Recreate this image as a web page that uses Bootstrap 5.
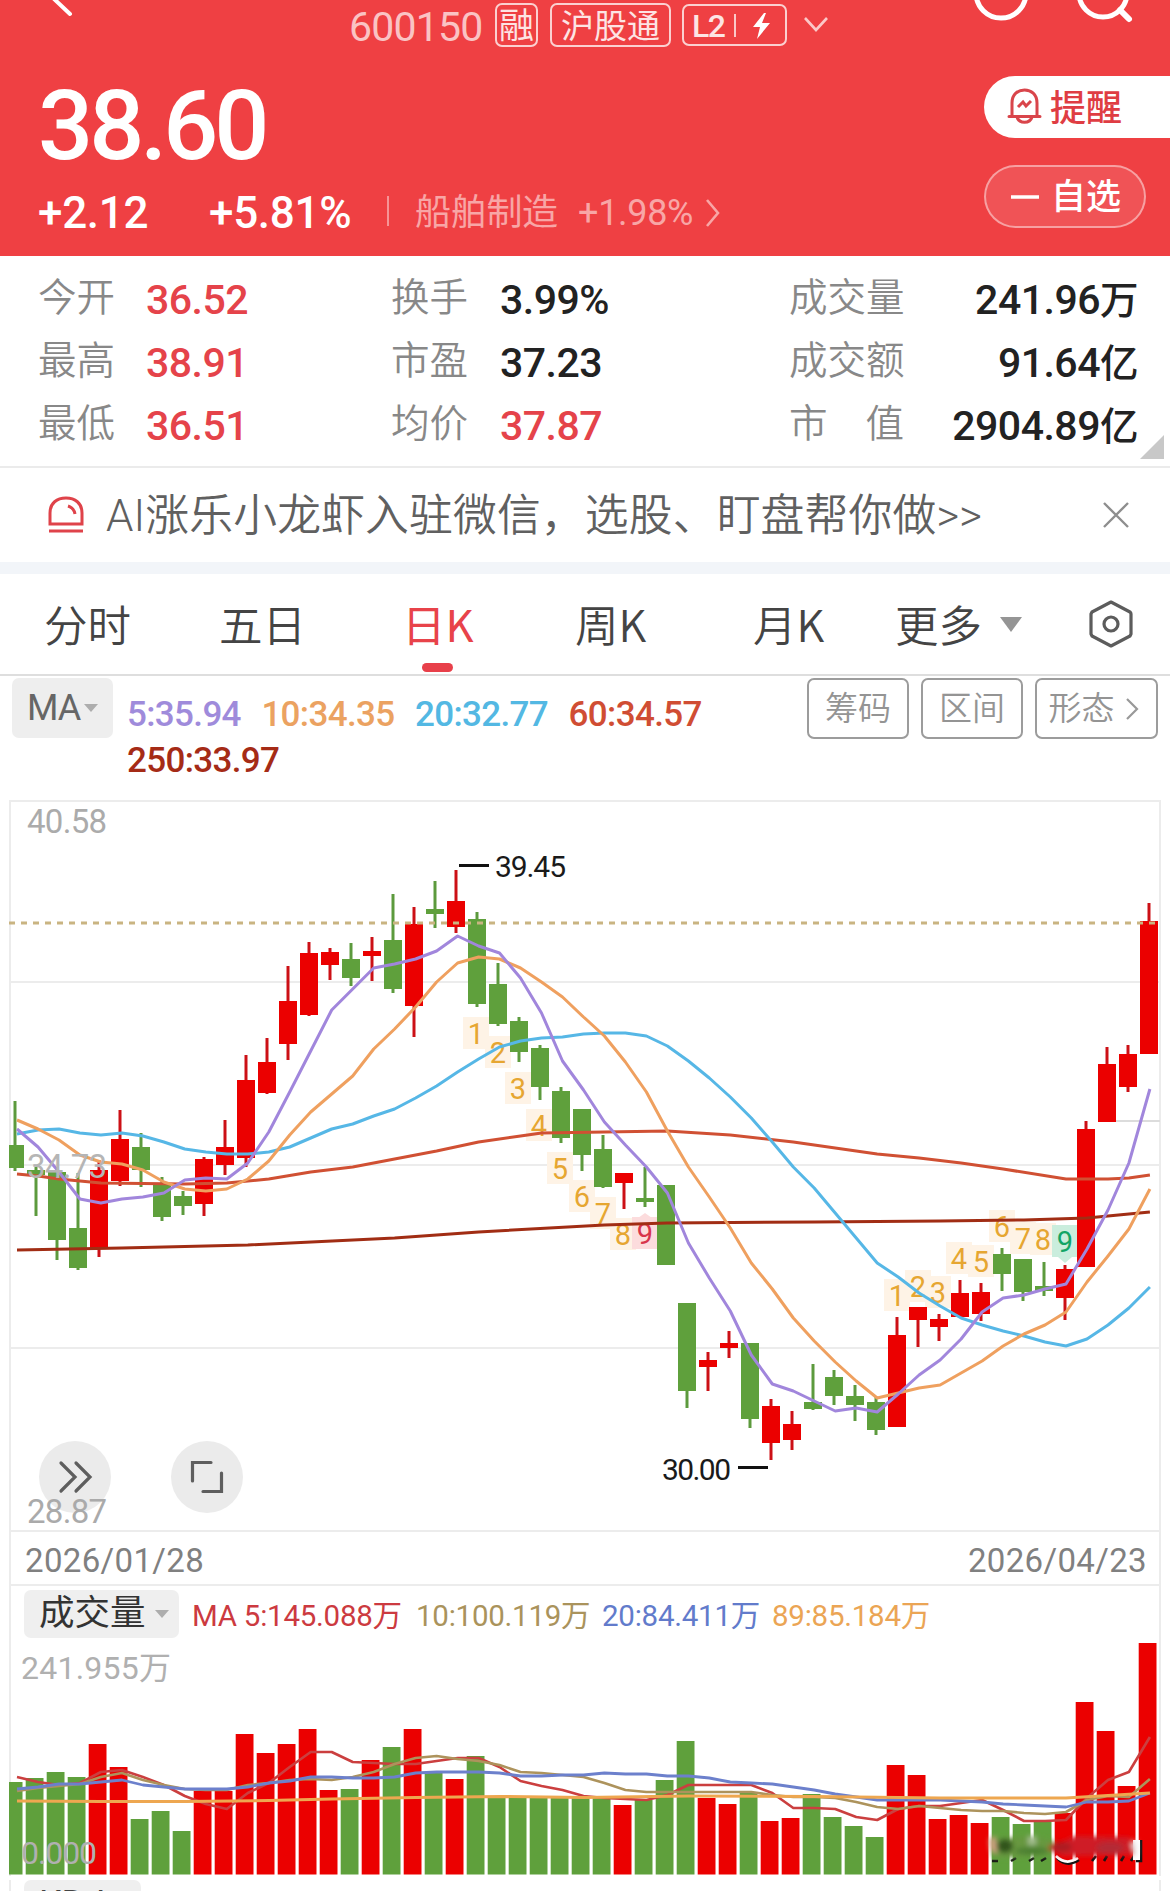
<!DOCTYPE html>
<html lang="zh-CN">
<head>
<meta charset="utf-8">
<meta name="viewport" content="width=device-width, initial-scale=1">
<title>600150</title>
<link href="https://cdn.jsdelivr.net/npm/bootstrap@5.3.0/dist/css/bootstrap.min.css" rel="stylesheet">
<style>
body{width:1170px;height:1891px;overflow:hidden;margin:0;background:#fff;font-family:Roboto,"Noto Sans CJK SC",sans-serif;line-height:1;color:#222}
svg{display:block;flex:none}
.text-nowrap{white-space:nowrap}
.hero{background:#ef4043;height:256px;color:#fff}
.titlebar{height:50px;padding-left:64px}
.back-ico{margin-left:-16px}
.code{font-size:41px;letter-spacing:-.8px;color:#fac3c4;width:133px;margin-left:269px;padding-top:5px}
.tagbox{border:2px solid #fbd0d0;border-radius:7px;height:44px;font-size:35px;color:#fde4e4;padding-top:3px}
.price{font-size:97px;font-weight:500;letter-spacing:-4px;height:69px;line-height:74px;margin-top:39px}
.chg{font-size:44px;height:40px;margin-top:35px;font-weight:500;line-height:44px;letter-spacing:-.3px}
.sector{font-size:36px;color:#f8a6a6;font-weight:400}
.pill-w{width:186px;height:62px;border-radius:31px 0 0 31px;background:#fff;color:#df3d43;margin-top:26px;font-size:36px;font-weight:500;padding-left:23px}
.pill-w span{padding-top:3px}
.pill-o{width:162px;height:63px;border-radius:32px;background:rgba(255,255,255,.1);border:2px solid rgba(255,255,255,.45);margin-top:27px;font-size:35px;font-weight:500;padding-left:25px}
.pill-o span{padding-top:2px}
.stats{height:212px;padding-top:11px;border-bottom:2px solid #ebebeb;position:relative}
.stat-row{height:63px;padding-left:38px;padding-right:32px}
.lb{font-size:38.5px;color:#888;font-weight:350}
.vl{font-size:41px;font-weight:500;padding-top:4px;letter-spacing:-.5px}
.up{color:#e5434a}
.c1l{width:108px}.c1v{width:245px}.c2l{width:109px}.c2v{width:289px}.c3l{width:115px}
.corner{position:absolute;right:6px;bottom:7px}
.notice{height:94px;padding-left:47px;padding-right:40px;font-size:43.8px;color:#606060;font-weight:350}
.notice span{margin-left:21px;padding-top:3px;letter-spacing:.15px}
.band{height:12px;background:#f2f5f9}
.tabs{height:102px;border-bottom:2px solid #dedede;font-family:"Noto Sans CJK SC",sans-serif;font-size:43.5px;color:#444;padding-left:44px;font-weight:350}
.tabs>div{padding-top:0}
.tabs .on{color:#e8434a;position:relative;font-weight:400}
.tabs .on::after{content:"";position:absolute;left:20px;top:61px;width:31px;height:9px;border-radius:5px;background:#e8404a}
.legend{height:114px;padding-left:12px;padding-top:2px}
.chip{background:#eee;border-radius:7px}
.ma-chip{width:101px;height:60px;font-size:36px;color:#666;padding-left:15px;letter-spacing:-1px}
.ma-vals{width:640px;margin-left:14px;margin-top:14px;font-size:35px;line-height:46px;font-weight:500;letter-spacing:-.65px;column-gap:20.5px}
.obtn{border:2px solid #9c9c9c;border-radius:7px;height:61px;width:102px;font-size:33px;color:#949494;font-weight:350}
.c5{color:#9f8bdb}.c10{color:#eba261}.c20{color:#53b8e3}.c60{color:#d04d33}.c250{color:#a52b16}
.frame{margin:0 9px 0 9px;border-left:2px solid #ececec;border-right:2px solid #ececec}
.dates{height:54px;border-bottom:2px solid #ececec;font-size:33px;color:#808080;padding:4px 12px 0 14px;letter-spacing:.35px}
.vol-head{height:55px;padding-left:13px;font-size:29.5px;padding-top:4px}
.vol-chip{width:155px;height:48px;background:#efefef;font-size:35.5px;color:#333;padding-left:15px}
.vol-head .v{letter-spacing:-.25px;margin:12px 0 0 13px;gap:14px}
.kdj{width:117px;height:40px;font-size:36px;color:#444;margin-left:13px;margin-top:4px;padding:6px 0 0 15px;background:#efefef}
</style>
<script src="https://cdn.jsdelivr.net/npm/bootstrap@5.3.0/dist/js/bootstrap.bundle.min.js"></script>
</head>
<body>
<header class="hero">
  <div class="titlebar d-flex align-items-center text-nowrap">
    <svg class="back-ico" width="32" height="50"><path d="M4-3 22 14" stroke="#fff" stroke-width="4" stroke-linecap="round"/></svg>
    <div class="code">600150</div>
    <div class="tagbox d-flex align-items-center justify-content-center" style="width:43px;margin-left:13px">融</div>
    <div class="tagbox d-flex align-items-center justify-content-center" style="width:121px;margin-left:12px;font-size:33px">沪股通</div>
    <div class="tagbox d-flex align-items-center" style="width:105px;height:42px;margin-left:11px;padding:0 0 0 8px;font-size:32px;font-weight:500;letter-spacing:-1.500px"><span style="padding-top:2px">L2</span>
      <svg width="58" height="34"><path d="M11 6V29" stroke="#fbc8c8" stroke-width="2"/><path d="M40 5 29 19H36L33 31 46 15H38L42 5Z" fill="#fff"/></svg></div>
    <svg width="26" height="18" style="margin-left:16px"><path d="M2 2 13 14 24 2" fill="none" stroke="#fbc8c8" stroke-width="2.6"/></svg>
    <svg width="170" height="50" style="margin-left:140px"><g fill="none" stroke="#fff" stroke-width="5"><circle cx="32" cy="-7" r="25"/><circle cx="134" cy="-7" r="24"/><path d="M151 10 160 19" stroke-linecap="round" stroke-width="6"/></g></svg>
  </div>
  <div class="d-flex justify-content-between text-nowrap">
    <div style="padding-left:38px">
      <div class="price">38.60</div>
      <div class="chg d-flex align-items-center">
        <span style="width:171px">+2.12</span><span style="width:178px">+5.81%</span>
        <svg width="28" height="34"><path d="M1 0V30" stroke="#f69496" stroke-width="2"/></svg>
        <span class="sector" style="width:163px">船舶制造</span><span class="sector" style="width:126px">+1.98%</span>
        <svg width="18" height="30"><path d="M3 2 14 15 3 28" fill="none" stroke="#f8a6a6" stroke-width="2.6"/></svg>
      </div>
    </div>
    <div>
      <div class="pill-w d-flex align-items-center">
        <svg width="36" height="38" viewBox="0 0 36 38" fill="none" stroke="#d9454b" stroke-width="3"><path d="M5 28V15C5 6 11 2 17.500 2S30 6 30 15V28M2 28.500H33" stroke-linecap="round"/><path d="M10 29C12 36 23 36 25 29" /><path d="M11 19 16 14 19 18 24 13"/></svg>
        <span style="margin-left:7px">提醒</span>
      </div>
      <div class="pill-o d-flex align-items-center"><svg width="28" height="4"><path d="M0 2H28" stroke="#fff" stroke-width="3.500"/></svg><span style="margin-left:12px">自选</span></div>
    </div>
  </div>
</header>

<section class="stats text-nowrap">
  <div class="stat-row d-flex align-items-center"><div class="lb c1l">今开</div><div class="vl c1v up">36.52</div><div class="lb c2l">换手</div><div class="vl c2v">3.99%</div><div class="lb c3l">成交量</div><div class="vl ms-auto">241.96<small style="font-size:38.500px">万</small></div></div>
  <div class="stat-row d-flex align-items-center"><div class="lb c1l">最高</div><div class="vl c1v up">38.91</div><div class="lb c2l">市盈</div><div class="vl c2v">37.23</div><div class="lb c3l">成交额</div><div class="vl ms-auto">91.64<small style="font-size:38.500px">亿</small></div></div>
  <div class="stat-row d-flex align-items-center"><div class="lb c1l">最低</div><div class="vl c1v up">36.51</div><div class="lb c2l">均价</div><div class="vl c2v up">37.87</div><div class="lb c3l d-flex justify-content-between"><span>市</span><span>值</span></div><div class="vl ms-auto">2904.89<small style="font-size:38.500px">亿</small></div></div>
  <svg class="corner" width="24" height="24"><path d="M24 0V24H0Z" fill="#c8c8c8"/></svg>
</section>

<section class="notice d-flex align-items-center text-nowrap">
  <svg width="38" height="38" viewBox="0 0 38 38" fill="none" stroke="#df434a" stroke-width="3"><path d="M3 28V17C3 7 10 2 19 2S35 7 35 17V28Z"/><path d="M2 35H36M21 10Q27 12 28 18"/></svg>
  <span>AI涨乐小龙虾入驻微信，选股、盯盘帮你做&gt;&gt;</span>
  <svg class="ms-auto" width="28" height="28"><path d="M2 2 26 26M26 2 2 26" stroke="#8e8e8e" stroke-width="2.400"/></svg>
</section>
<div class="band"></div>

<nav class="tabs d-flex align-items-center text-nowrap">
  <div style="width:175px">分时</div><div style="width:183px">五日</div><div class="on" style="width:173px">日K</div><div style="width:178px">周K</div><div style="width:142px">月K</div><div>更多</div>
  <svg width="22" height="16" style="margin-left:18px"><path d="M0 1H22L11 16Z" fill="#959595"/></svg>
  <svg width="46" height="48" viewBox="0 0 46 48" style="margin-left:66px" fill="none" stroke="#5c5c5c" stroke-width="3.200" stroke-linejoin="round"><path d="M23 2 42 12Q43 13 43 14V34L42 36 23 46 4 36 3 34V14L4 12Z"/><circle cx="23" cy="24" r="7"/></svg>
</nav>

<section class="legend d-flex align-items-start text-nowrap">
  <div class="chip ma-chip d-flex align-items-center">MA<svg width="16" height="10" style="margin-left:3px"><path d="M1 1H15L8 9Z" fill="#adadad"/></svg></div>
  <div class="ma-vals d-flex flex-wrap"><span class="c5">5:35.94</span><span class="c10">10:34.35</span><span class="c20">20:32.77</span><span class="c60">60:34.57</span><span class="c250">250:33.97</span></div>
  <div class="d-flex" style="gap:12px;margin-left:40px"><div class="obtn d-flex align-items-center justify-content-center">筹码</div><div class="obtn d-flex align-items-center justify-content-center">区间</div><div class="obtn d-flex align-items-center justify-content-center" style="width:123px;gap:11px;padding-right:6px">形态<svg width="13" height="24"><path d="M1 2 11 12 1 22" fill="none" stroke="#999" stroke-width="2.200"/></svg></div></div>
</section>

<svg id="kline" width="1170" height="742" viewBox="0 790 1170 742"></svg>
<div class="frame dates d-flex align-items-center justify-content-between"><span>2026/01/28</span><span>2026/04/23</span></div>
<div class="frame">
  <div class="vol-head d-flex align-items-start text-nowrap">
    <div class="chip vol-chip d-flex align-items-center">成交量<svg width="16" height="10" style="margin-left:8px"><path d="M1 1H15L8 9Z" fill="#adadad"/></svg></div>
    <div class="v d-flex"><span style="color:#cc3a40;width:210px">MA 5:145.088万</span><span style="color:#aa935c;width:172px">10:100.119万</span><span style="color:#627bcb;width:156px">20:84.411万</span><span style="color:#eba555">89:85.184万</span></div>
  </div>
</div>
<svg id="vol" width="1170" height="235" viewBox="0 1641 1170 235"></svg>
<div class="frame" style="height:20px"><div class="chip kdj">KDJ</div></div>

<script>
const RED='#eb0000',GREEN='#5fa03c';
const x0=15,step=21;
// [direction, high, bodyTop, bodyBottom, low]
const K=`g1101,1145,1168,1171 g1167,1170,1175,1216 g1170,1172,1240,1260 g1173,1228,1268,1270 r1160,1170,1249,1257 r1110,1139,1181,1186 g1133,1147,1170,1187 g1177,1183,1217,1221 g1191,1196,1206,1215 r1157,1159,1204,1216 r1120,1147,1165,1175 r1055,1080,1158,1167 r1038,1062,1093,1094 r966,1001,1044,1060 r942,953,1015,1016 r948,952,965,980 g943,959,978,986 r937,951,956,981 g894,940,989,993 r907,924,1006,1037 g881,909,914,928 r870,901,927,933 g912,919,1004,1007 g963,984,1024,1026 g1017,1021,1052,1062 g1045,1048,1087,1100 g1087,1091,1138,1143 g1109,1109,1155,1171 g1135,1149,1187,1188 r1173,1173,1183,1209 g1167,1198,1202,1207 g1185,1185,1265,1265 g1303,1303,1391,1408 r1352,1360,1367,1391 r1331,1343,1348,1358 g1343,1343,1419,1428 r1399,1406,1443,1460 r1411,1424,1440,1450 g1364,1402,1409,1410 g1370,1377,1396,1405 g1385,1396,1405,1421 g1397,1402,1430,1435 r1317,1335,1427,1427 r1307,1307,1320,1347 r1314,1319,1327,1341 r1280,1293,1317,1318 r1283,1292,1314,1321 g1248,1254,1274,1291 g1259,1259,1292,1301 g1262,1286,1291,1296 r1265,1269,1298,1320 r1121,1129,1267,1267 r1047,1064,1122,1122 r1045,1054,1087,1092 r903,921,1054,1054`.split(/\s+/).map(s=>[s[0],...s.slice(1).split(',').map(Number)]);
const line=(pts,c,w=3)=>`<polyline fill="none" stroke="${c}" stroke-width="${w}" stroke-linejoin="round" points="${pts.map(p=>(17+p[0]*20.98).toFixed(1)+','+p[1]).join(' ')}"/>`;
const seq=s=>s.split(',').map((v,i)=>[i,+v]);
const pairs=s=>s.split(' ').map(p=>p.split(',').map(Number));
let s='';
for(const y of [801,982,1165,1348,1531])s+=`<path d="M10 ${y}H1160" stroke="#ececec" stroke-width="2"/>`;
s+='<path d="M10 800V1532M1160 800V1532" stroke="#ececec" stroke-width="2"/><path d="M1108 1121H1160" stroke="#dcdcdc" stroke-width="2"/>';
const tag=(x,y,t,c='#e6a631',bg='#fef3e6')=>`<rect x="${x-13}" y="${y-16}" width="26" height="32" fill="${bg}"/><text x="${x}" y="${y+10.5}" font-size="29" text-anchor="middle" fill="${c}">${t}</text>`;
[[476,1033],[498,1052],[518,1088],[539,1125],[560,1168],[582,1196],[603,1213],[623,1234]].forEach((p,i)=>s+=tag(...p,i+1));
s+='<path d="M638 1218 645 1213 652 1218Z" fill="#fcdcdd"/>'+tag(645,1233,9,'#d8344c','#fcdcdd');
[[897,1295],[918,1286],[938,1292],[959,1258],[981,1261],[1002,1226],[1023,1238],[1043,1239]].forEach((p,i)=>s+=tag(...p,i+1));
s+='<path d="M1058 1257 1065 1263 1072 1257Z" fill="#caeddd"/>'+tag(1065,1241,9,'#12a566','#caeddd');
K.forEach(([d,h,t,b,l],k)=>{const x=x0+k*step,c=d=='r'?RED:GREEN,w=d=='r'?'#cc1016':'#5c9a3d',L=Math.max(9,x-9);
 s+=`<path d="M${x} ${h}V${l}" stroke="${w}" stroke-width="3"/><rect x="${L}" y="${t}" width="${x+9-L}" height="${b-t}" fill="${c}"/>`});
s+='<path d="M9 923H1160" stroke="#c9b481" stroke-width="3" stroke-dasharray="6 6"/>';
s+=line(pairs('0,1250 5,1248 11,1245 18,1238 22,1232 28,1225 31,1223 38,1222 44,1221 48,1220 51,1218 54,1212'),'#a12d14',3);
s+=line(pairs('0,1174 1,1176 2,1179 3,1181 4,1183 8,1184 10,1183 12,1179 14,1172 16,1167 18,1159 20,1151 22,1142 24,1136 25,1133 28,1132 31,1131 34,1135 37,1142 41,1154 43,1158 45,1163 47,1169 50,1179 52,1179 53,1178 54,1175'),'#d05033');
s+=line(seq('1134,1130,1129,1133,1135,1133,1136,1142,1149,1152,1154,1154,1152,1147,1138,1129,1124,1116,1109,1098,1086,1072,1059,1047,1041,1038,1037,1034,1033,1033,1036,1046,1061,1078,1097,1118,1142,1167,1188,1213,1238,1263,1277,1293,1306,1318,1325,1331,1336,1342,1346,1339,1325,1308,1287'),'#56b7e6');
s+=line(seq('1120,1129,1140,1155,1162,1164,1170,1182,1189,1191,1189,1179,1161,1135,1112,1094,1076,1049,1029,1007,982,963,957,959,968,982,997,1017,1036,1062,1092,1131,1167,1197,1228,1263,1289,1318,1341,1362,1381,1398,1393,1388,1385,1373,1361,1346,1334,1325,1312,1282,1256,1229,1189'),'#efa05f');
s+=line(seq('1129,1147,1172,1199,1203,1199,1197,1193,1180,1178,1179,1163,1132,1092,1051,1010,989,968,964,959,951,936,946,953,978,1013,1061,1090,1122,1145,1167,1193,1243,1278,1311,1355,1384,1391,1401,1411,1408,1412,1394,1375,1360,1339,1312,1298,1295,1289,1284,1249,1210,1163,1089'),'#a186dc');
const txt=(x,y,w,fs,c,t)=>`<text x="${x}" y="${y}" font-size="${fs}" fill="${c}" textLength="${w}" lengthAdjust="spacing">${t}</text>`;
s+='<path d="M459 865.500H489M738 1467.500H768" stroke="#111" stroke-width="3"/>'+txt(495,877,71,30,'#1a1a1a','39.45')+txt(662,1479.5,69,30,'#1a1a1a','30.00');
s+='<g fill="#ebebeb"><circle cx="75" cy="1477" r="36"/><circle cx="207" cy="1477" r="36"/></g><g fill="none" stroke="#5e5e5e" stroke-width="3.200" stroke-linecap="round"><path d="M61 1463 75 1477 61 1491M76 1463 90 1477 76 1491M211 1462.500H192.500V1481M203 1491.500H221.500V1473"/></g>';
s+=txt(27,833,80,33,'#ababab','40.58')+txt(27,1178,80,33,'#b5b5b5','34.73')+txt(27,1523,80,33,'#aaa','28.87');
kline.innerHTML=s;

// volume bars: tops on the panel's scale, baseline 1875
const V='g1782 g1778 g1772 g1777 r1744 r1767 g1819 g1811 g1831 r1791 r1791 r1734 r1753 r1744 r1729 r1790 g1789 r1760 g1747 r1729 g1772 r1779 g1756 g1798 g1797 g1798 g1798 g1796 g1798 r1805 g1800 g1780 g1741 r1798 r1804 g1793 r1821 r1818 g1794 g1817 g1826 g1837 r1765 r1775 r1819 r1815 r1823 g1817 g1824 g1822 r1813 r1702 r1731 r1786 r1643'.split(' ');
let v='<path d="M10 1641V1876M1160 1641V1876" stroke="#ececec" stroke-width="2"/>';
V.forEach((b,k)=>{const x=Math.max(9,4.7+k*21),y=+b.slice(1);v+=`<rect x="${x}" y="${y}" width="${4.7+k*21+17.8-x}" height="${1874.500-y}" fill="${b[0]=='r'?RED:GREEN}"/>`});
v+=line(seq('1777,1782,1785,1783,1772,1770,1777,1785,1796,1804,1809,1793,1783,1767,1752,1752,1762,1763,1764,1764,1761,1758,1758,1767,1781,1786,1790,1796,1798,1799,1800,1795,1785,1785,1785,1785,1793,1808,1808,1809,1817,1820,1809,1806,1806,1803,1800,1810,1821,1821,1820,1798,1780,1772,1737'),'#cb3f3f',2.6);
v+=line(seq('1791,1788,1786,1784,1777,1773,1780,1785,1789,1790,1790,1785,1783,1780,1779,1780,1777,1772,1764,1758,1756,1759,1761,1765,1772,1773,1775,1777,1783,1790,1792,1792,1792,1792,1792,1792,1795,1797,1797,1798,1802,1807,1809,1806,1808,1810,1811,1811,1813,1814,1812,1800,1796,1797,1779'),'#ad935c',2.6);
v+=line(seq('1789,1787,1784,1784,1782,1780,1785,1787,1789,1789,1789,1787,1783,1781,1777,1777,1778,1778,1777,1773,1772,1772,1772,1773,1776,1776,1775,1775,1773,1774,1774,1776,1776,1778,1782,1783,1784,1787,1790,1794,1797,1800,1800,1800,1800,1801,1802,1804,1805,1806,1807,1802,1802,1801,1793'),'#6c80cc',2.8);
v+=line(pairs('0,1801 4,1801.5 8,1801.5 12,1800.500 15,1799 19,1797.500 23,1796.500 27,1797.500 32,1796 38,1796.500 44,1798 50,1798 52,1795.500 54,1793'),'#eea750',3);
v+=txt(21,1679,150,32,'#b0b0b0','241.955万')+txt(21,1864,76,32,'#b0b0b0','0.000');
// smeared signature in the corner of the panel
v+='<defs><filter id="bl" x="-20%" y="-50%" width="140%" height="200%"><feGaussianBlur stdDeviation="2.6"/></filter></defs><g fill="none" stroke="#151515" stroke-width="2.600"><path d="M992 1861h6M1011 1861l5-3M1029 1861l5-3M1041 1861l5-3M1092 1861l4-5M1104 1861l3-5M1121 1861l3-5M1131 1861l3-5M1141 1840V1861H1136"/><path d="M1057 1858q10 10 22 2"/><path d="M1056 1856q10 10 22 2" stroke="#fff"/></g><rect x="1133" y="1840" width="7" height="20" fill="#fff"/><g filter="url(#bl)"><path d="M989 1838h20l18-2 26 4-6 16-54 2z" fill="#68983f"/><path d="M989 1839l6-3 2 18-7-4z" fill="#d4a184"/><path d="M1028 1836h8v9h-8z" fill="#a3bd8e"/><ellipse cx="1005" cy="1846" rx="8" ry="7" fill="#31551f"/><ellipse cx="1032" cy="1851" rx="17" ry="4" fill="#4b8030"/><path d="M1047 1848 1075 1836 1130 1837 1134 1855 1062 1856Z" fill="#cf1f28"/><ellipse cx="1061" cy="1847" rx="11" ry="5" fill="#ad1c22"/><ellipse cx="1110" cy="1848" rx="14" ry="6" fill="#b42935"/><path d="M1131 1844l6-4v18z" fill="#eee"/></g>';
vol.innerHTML=v;
</script>
</body>
</html>
